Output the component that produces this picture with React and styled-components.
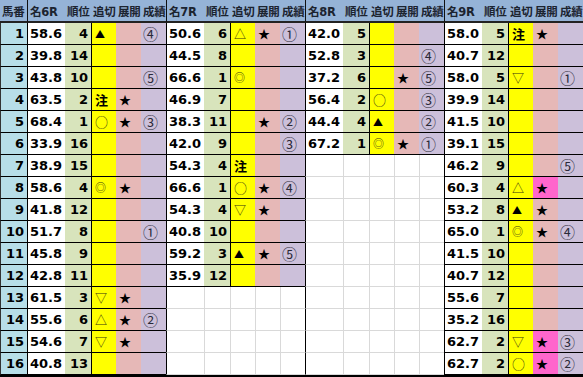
import React from 'react';
import styled, { createGlobalStyle, css } from 'styled-components';

const GlobalStyle = createGlobalStyle`
  html, body {
    margin: 0;
    padding: 0;
    background: #fff;
  }
`;

const colors = {
  head: '#95b3d7',
  no: '#b7dee8',
  val: '#ffffff',
  rank: '#d8e4bc',
  oi: '#ffff00',
  ten: '#e6b8b7',
  res: '#ccc0da',
  hot: '#ff66cc',
};

const Sheet = styled.div`
  display: grid;
  grid-template-columns: 27px repeat(4, 38px 26px 25px 25px 25px);
  grid-template-rows: 23px repeat(16, 22px);
  width: 583px;
  overflow: hidden;
  border-bottom: 2px solid #000;
  font-family: "DejaVu Sans", "Noto Sans CJK JP", sans-serif;
`;

const HeadCell = styled.div`
  box-sizing: border-box;
  background: ${colors.head};
  border-bottom: 2px solid #222;
  border-left: ${({ $sep }) => ($sep ? '1px solid #111' : 'none')};
  display: flex;
  align-items: center;
  padding-left: 2px;
  white-space: nowrap;
  font-family: "DejaVu Sans", "Noto Sans CJK JP", sans-serif;
  font-weight: bold;
  font-size: 11.5px;
  letter-spacing: -0.3px;
  color: #1c2430;
`;

const Cell = styled.div`
  box-sizing: border-box;
  display: flex;
  align-items: center;
  white-space: nowrap;
  background: ${({ $kind, $hot }) => ($hot ? colors.hot : colors[$kind] || '#fff')};
  border-bottom: 1px solid #000;
  ${({ $sep }) => $sep && css`border-left: 1px solid #000;`}
  ${({ $kind }) =>
    ($kind === 'no' || $kind === 'val' || $kind === 'rank') &&
    css`
      justify-content: flex-end;
      padding-right: 3px;
      font-weight: bold;
      font-size: 13px;
      color: #000;
    `}
  ${({ $kind }) => $kind === 'no' && css`border-left: 1px solid #333;`}
  ${({ $kind }) =>
    ($kind === 'oi' || $kind === 'ten' || $kind === 'res') &&
    css`
      justify-content: flex-start;
      padding-left: 3px;
    `}
  ${({ $kind }) => $kind === 'res' && css`padding-left: 2px;`}
  ${({ $kind }) => $kind === 'oi' && css`border-left: 1px solid #000;`}
`;

const Blank = styled.div`
  box-sizing: border-box;
  background: #fff;
  border-bottom: 1px solid #d9d9d9;
  border-left: ${({ $sep }) => ($sep ? '1px solid #000' : '1px solid #d9d9d9')};
`;

const Mark = styled.span`
  font-family: "Noto Sans CJK JP", sans-serif;
  font-size: ${({ $size }) => $size}px;
  font-weight: ${({ $bold }) => ($bold ? 'bold' : 'normal')};
  color: ${({ $color }) => $color};
  line-height: 1;
`;

const markStyle = {
  '▲': { size: 10, color: '#000' },
  '△': { size: 12, color: '#3a3a10' },
  '▽': { size: 12, color: '#3a3a10' },
  '◎': { size: 11, color: '#3a3a10' },
  '○': { size: 13, color: '#3a3a10' },
  '注': { size: 13, color: '#000', bold: true },
  '★': { size: 12, color: '#000' },
};

const races = [
  {
    name: '名6R',
    rows: [
      ['58.6', 4, '▲', '', '④'],
      ['39.8', 14],
      ['43.8', 10, '', '', '⑤'],
      ['63.5', 2, '注', '★'],
      ['68.4', 1, '○', '★', '③'],
      ['33.9', 16],
      ['38.9', 15],
      ['58.6', 4, '◎', '★'],
      ['41.8', 12],
      ['51.7', 8, '', '', '①'],
      ['45.8', 9],
      ['42.8', 11],
      ['61.5', 3, '▽', '★'],
      ['55.6', 6, '△', '★', '②'],
      ['54.6', 7, '▽', '★'],
      ['40.8', 13],
    ],
  },
  {
    name: '名7R',
    rows: [
      ['50.6', 6, '△', '★', '①'],
      ['44.5', 8],
      ['66.6', 1, '◎'],
      ['46.9', 7],
      ['38.3', 11, '', '★', '②'],
      ['42.0', 9, '', '', '③'],
      ['54.3', 4, '注'],
      ['66.6', 1, '○', '★', '④'],
      ['54.3', 4, '▽', '★'],
      ['40.8', 10],
      ['59.2', 3, '▲', '★', '⑤'],
      ['35.9', 12],
    ],
  },
  {
    name: '名8R',
    rows: [
      ['42.0', 5],
      ['52.8', 3, '', '', '④'],
      ['37.2', 6, '', '★', '⑤'],
      ['56.4', 2, '○', '', '③'],
      ['44.4', 4, '▲', '', '②'],
      ['67.2', 1, '◎', '★', '①'],
    ],
  },
  {
    name: '名9R',
    hot: [7, 14, 15],
    rows: [
      ['58.0', 5, '注', '★'],
      ['40.7', 12],
      ['58.0', 5, '▽', '', '①'],
      ['39.9', 14],
      ['41.5', 10],
      ['39.1', 15],
      ['46.2', 9, '', '', '⑤'],
      ['60.3', 4, '△', '★'],
      ['53.2', 8, '▲', '★'],
      ['65.0', 1, '◎', '★', '④'],
      ['41.5', 10],
      ['40.7', 12],
      ['55.6', 7],
      ['35.2', 16],
      ['62.7', 2, '▽', '★', '③'],
      ['62.7', 2, '○', '★', '②'],
    ],
  },
];

const Glyph = ({ ch }) => {
  if (!ch) return null;
  const s = markStyle[ch] || { size: 15, color: '#2a2a38' };
  return (
    <Mark $size={s.size} $color={s.color} $bold={s.bold}>
      {ch}
    </Mark>
  );
};

const App = () => {
  const rows = Array.from({ length: 16 }, (_, i) => i);

  return (
    <>
      <GlobalStyle />
      <Sheet>
        <HeadCell>馬番</HeadCell>
        {races.map((race) => (
          <React.Fragment key={race.name}>
            <HeadCell $sep>{race.name}</HeadCell>
            <HeadCell>順位</HeadCell>
            <HeadCell>追切</HeadCell>
            <HeadCell>展開</HeadCell>
            <HeadCell>成績</HeadCell>
          </React.Fragment>
        ))}

        {rows.map((i) => (
          <React.Fragment key={i}>
            <Cell $kind="no">{i + 1}</Cell>
            {races.map((race) => {
              const row = race.rows[i];
              if (!row) {
                return (
                  <React.Fragment key={race.name}>
                    <Blank $sep />
                    <Blank />
                    <Blank />
                    <Blank />
                    <Blank />
                  </React.Fragment>
                );
              }
              const [val, rank, oi, ten, res] = row;
              const hot = race.hot && race.hot.includes(i);
              return (
                <React.Fragment key={race.name}>
                  <Cell $kind="val" $sep>{val}</Cell>
                  <Cell $kind="rank">{rank}</Cell>
                  <Cell $kind="oi"><Glyph ch={oi} /></Cell>
                  <Cell $kind="ten" $hot={hot}><Glyph ch={ten} /></Cell>
                  <Cell $kind="res"><Glyph ch={res} /></Cell>
                </React.Fragment>
              );
            })}
          </React.Fragment>
        ))}
      </Sheet>
    </>
  );
};

export default App;
